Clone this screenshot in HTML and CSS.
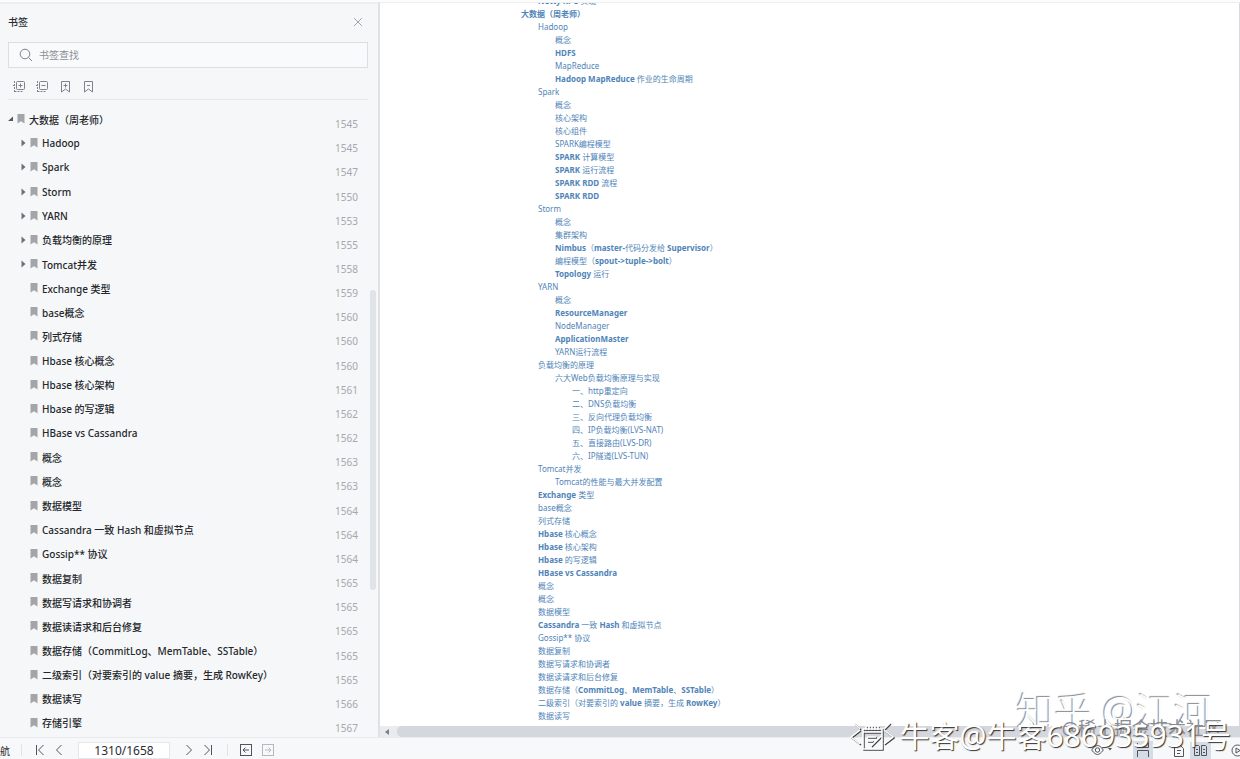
FILE: index.html
```
<!DOCTYPE html>
<html lang="zh-CN">
    <head>
        <meta charset="utf-8">
        <title>书签</title>
        <link rel="stylesheet" href="styles.css">
        <script src="main.js" defer></script>
    </head>

    <body>
        <svg class="defs" width="0" height="0">
            <symbol id="flag" viewBox="0 0 8 10">
                <path d="M0.5 0h7v9.6L4 7.2 0.5 9.6z" fill="#a3a5a8"/>
            </symbol>
            <symbol id="closed" viewBox="0 0 5 8">
                <path d="M0.5 0.5L4.5 4 0.5 7.5z" fill="#6d6f73"/>
            </symbol>
            <symbol id="open" viewBox="0 0 5 8">
                <path d="M5 1.5V6H0z" fill="#55575b"/>
            </symbol>
            <symbol id="logo" viewBox="0 0 46 32">
                <path d="M11 10L2 17l9 7M35 10l9 7-9 7M14 9h19v20H14zM14 12h19M18 17h9M18 21h6M22 26l10-10M5 3l6 6M41 3l-6 6M17 6v4M20 6v4M23 6v4M26 6v4M29 6v4" fill="none" stroke-width="1.5"/>
            </symbol>
        </svg>

        <div class="workspace">
            <aside class="sidebar">
                <header class="sidebarHeader">
                    <h1>书签</h1>
                    <button type="button" class="iconButton close" aria-label="关闭">
                        <svg width="10" height="10" viewBox="0 0 10 10"><path d="M1 1l8 8M9 1L1 9"/></svg>
                    </button>
                </header>

                <label class="search">
                    <svg width="14" height="14" viewBox="0 0 14 14"><circle cx="6" cy="6" r="4.8"/><path d="M9.6 9.6L13 13"/></svg>
                    <input type="text" placeholder="书签查找" aria-label="书签查找">
                </label>

                <div class="tools">
                    <button type="button" class="iconButton" aria-label="展开">
                        <svg width="13" height="13" viewBox="0 0 13 13"><rect x="3.5" y="1.5" width="8" height="8" rx="1"/><path d="M5.5 5.5h4M7.5 3.5v4"/><path d="M1.5 1v11M1.5 11.5h8M0 5.5h2" stroke-dasharray="2 1"/></svg>
                    </button>
                    <button type="button" class="iconButton" aria-label="折叠">
                        <svg width="13" height="13" viewBox="0 0 13 13"><rect x="3.5" y="1.5" width="8" height="8" rx="1"/><path d="M5.5 5.5h4"/><path d="M1.5 1v11M1.5 11.5h8M0 5.5h2" stroke-dasharray="2 1"/></svg>
                    </button>
                    <button type="button" class="iconButton" aria-label="添加书签">
                        <svg width="13" height="13" viewBox="0 0 13 13"><path d="M2.5 1.5h8v10.5L6.5 9l-4 3zM4.5 5.5h4M6.5 3.5v4"/></svg>
                    </button>
                    <button type="button" class="iconButton" aria-label="删除书签">
                        <svg width="13" height="13" viewBox="0 0 13 13"><path d="M2.5 1.5h8v10.5L6.5 9l-4 3zM5 5.5h3"/></svg>
                    </button>
                </div>

                <ul class="bookmarks" id="bookmarks"></ul>
                <div class="sidebarScroll"></div>
            </aside>

            <main class="page">
                <nav class="toc" id="toc"></nav>
                <div class="scrollbar">
                    <svg width="4" height="6" viewBox="0 0 4 6"><path d="M4 0v6L0 3z" fill="#7c7f88"/></svg>
                    <div class="thumb"></div>
                </div>
            </main>
        </div>

        <footer class="statusBar">
            <span class="navLabel">航</span>
            <span class="divider"></span>
            <button type="button" class="iconButton" aria-label="首页">
                <svg width="10" height="12" viewBox="0 0 10 12"><path d="M1.5 1v10M8.5 1l-5 5 5 5"/></svg>
            </button>
            <button type="button" class="iconButton" aria-label="上一页">
                <svg width="8" height="12" viewBox="0 0 8 12"><path d="M6.5 1l-5 5 5 5"/></svg>
            </button>
            <input type="text" class="pageInput" value="1310/1658" aria-label="页码">
            <button type="button" class="iconButton" aria-label="下一页">
                <svg width="8" height="12" viewBox="0 0 8 12"><path d="M1.5 1l5 5-5 5"/></svg>
            </button>
            <button type="button" class="iconButton" aria-label="末页">
                <svg width="10" height="12" viewBox="0 0 10 12"><path d="M1.5 1l5 5-5 5M8.5 1v10"/></svg>
            </button>
            <span class="divider wide"></span>
            <button type="button" class="iconButton" aria-label="后退">
                <svg width="12" height="12" viewBox="0 0 12 12"><rect x="0.5" y="0.5" width="11" height="11"/><path d="M9 6H3M5.5 3.5L3 6l2.5 2.5"/></svg>
            </button>
            <button type="button" class="iconButton forward" aria-label="前进">
                <svg width="12" height="12" viewBox="0 0 12 12"><rect x="0.5" y="0.5" width="11" height="11"/><path d="M3 6h6M6.5 3.5L9 6 6.5 8.5"/></svg>
            </button>
            <div class="viewModes">
                <button type="button" class="iconButton" aria-label="护眼">
                    <svg width="22" height="12" viewBox="0 0 22 12"><path d="M0.7 6C3 2.6 5 1.5 6.5 1.5S10 2.6 12.3 6C10 9.4 8 10.5 6.5 10.5S3 9.4 0.7 6z"/><circle cx="6.5" cy="6" r="2.2"/><path d="M17 4h4l-2 2.5z" fill="#50545c" stroke="none"/></svg>
                </button>
                <button type="button" class="iconButton active" aria-label="适合宽度">
                    <svg width="14" height="14" viewBox="0 0 14 14"><path d="M1.5 0v4.5h11V0M1.5 14V7.5h11V14"/></svg>
                </button>
                <div class="pageModes">
                    <button type="button" class="iconButton" aria-label="单页">
                        <svg width="12" height="13" viewBox="0 0 12 13"><path d="M1.5 1.5h6l3 3v8h-9zM4 6.5h4M4 9.5h3"/></svg>
                    </button>
                    <button type="button" class="iconButton active" aria-label="双页">
                        <svg width="15" height="13" viewBox="0 0 15 13"><path d="M1.5 1.5h4l1 1v9h-5zM8.5 1.5h4l1 1v9h-5zM3 5.5h2M3 8.5h2M10 5.5h2M10 8.5h2"/></svg>
                    </button>
                </div>
                <button type="button" class="iconButton" aria-label="播放">
                    <svg width="13" height="13" viewBox="0 0 13 13"><circle cx="6.5" cy="6.5" r="5.5"/><path d="M5 4v5l4-2.5z"/></svg>
                </button>
            </div>
        </footer>

        <div class="mark zhihu">知乎 @江河</div>
        <div class="mark juejin">@稀土掘金技术社区</div>
        <div class="mark niuke">
            <svg width="46" height="32" viewBox="0 0 46 32">
                <use href="#logo" x="1" y="1" stroke="#444"/>
                <use href="#logo" stroke="#fff"/>
            </svg>
            <span>牛客@牛客686935931号</span>
        </div>
    </body>
</html>
```
FILE: styles.css
```
* {
    box-sizing: border-box;
}

body {
    margin: 0;
    height: 100vh;
    display: flex;
    flex-direction: column;
    overflow: hidden;
    position: relative;
    font-family: "Noto Sans", "Noto Sans CJK SC", sans-serif;
    font-size: 10px;
    color: #2b2d31;
    background-color: #fff;
    border-top: 2px solid #fcfcfc;
}

.defs {
    position: absolute;
}

button,
input {
    font: inherit;
    color: inherit;
}

input:focus {
    outline: none;
}

.iconButton {
    display: flex;
    padding: 0;
    border: 0;
    background: none;
    cursor: pointer;
}

svg {
    display: block;
    flex: none;
}

.iconButton svg,
.search svg {
    fill: none;
    stroke: #7e828a;
}

.close svg {
    stroke: #a3a6ab;
}

.workspace {
    flex: 1;
    min-height: 0;
    display: flex;
}

.sidebar {
    position: relative;
    flex: none;
    width: 380px;
    padding: 0 10px 2px 8px;
    display: flex;
    flex-direction: column;
    background-color: #f5f7f9;
    border-top: 2px solid #eceef0;
    border-right: 2px solid #dfe1e4;
}

.sidebarHeader {
    display: flex;
    align-items: center;
    justify-content: space-between;
    height: 35px;
    padding-right: 5px;
}

.sidebarHeader h1 {
    margin: 0;
    font-size: 10px;
    font-weight: 500;
}

.search {
    display: flex;
    align-items: center;
    gap: 6px;
    height: 26px;
    margin-top: 3px;
    padding-left: 10px;
    border: 1px solid #dcdfe2;
    background-color: #f8fafb;
}

.search input {
    flex: 1;
    padding: 0;
    border: 0;
    background: none;
}

.search input::placeholder {
    color: #8d9096;
    opacity: 1;
}

.tools {
    display: flex;
    align-items: center;
    gap: 10px;
    height: 32px;
    padding: 5px 0 0 5px;
    border-bottom: 1px solid #e4e7ea;
}

.bookmarks {
    flex: 1;
    display: flex;
    flex-direction: column;
    list-style: none;
    margin: 0;
    padding: 7px 0 0;
}

.bookmarks li {
    flex: 1 1 24px;
    display: flex;
    align-items: center;
    gap: 4px;
    padding: 0 10px 0 0;
}

.bookmarks .child {
    padding-left: 13px;
}

.bookmarks a {
    flex: 1;
    color: #25272b;
    font-weight: 500;
    text-decoration: none;
}

.bookmarks .num {
    padding-top: 10px;
    color: #a5a8ae;
}

.sidebarScroll {
    position: absolute;
    right: 2px;
    top: 39%;
    width: 6px;
    height: 41%;
    border-radius: 3px;
    background-color: #e1e4e7;
}

.page {
    flex: 1;
    min-width: 0;
    display: flex;
    flex-direction: column;
    border-top: 1px solid #eeeef0;
}

.toc {
    flex: 1;
    min-height: 0;
    overflow: hidden;
    padding-left: 141px;
    border-right: 1px solid #d8dadf;
    font-size: 8px;
    line-height: 13px;
}

.toc a {
    display: block;
    color: #4f84b8;
    text-decoration: none;
    white-space: nowrap;
}

.toc a:first-child {
    margin-top: -9px;
}

.toc .level1 {
    padding-left: 17px;
}

.toc .level2 {
    padding-left: 34px;
}

.toc .level3 {
    padding-left: 51px;
}

.scrollbar {
    display: flex;
    align-items: center;
    height: 11px;
    padding-left: 5px;
    gap: 8px;
    background-color: #e9ebef;
}

.thumb {
    flex: 1;
    height: 11px;
    border-radius: 5px 0 0 5px;
    background-color: #d5d7df;
}

.statusBar {
    flex: none;
    display: flex;
    align-items: center;
    height: 22px;
    padding-top: 3px;
    border-top: 1px solid #e8eaec;
    background-color: #f6f8f9;
    font-size: 12px;
}

.statusBar svg {
    stroke: #50545c;
}

.navLabel {
    width: 9px;
    font-size: 10px;
}

.divider {
    width: 1px;
    height: 12px;
    margin: 0 13px 0 12px;
    background-color: #e1e3e6;
}

.divider.wide {
    margin: 0 12px 0 14px;
}

.statusBar > .iconButton + .iconButton {
    margin-left: 10px;
}

.statusBar .pageInput {
    width: 92px;
    height: 17px;
    margin: 0 15px;
    padding: 0;
    border: 1px solid #e5e7e9;
    background-color: #fff;
    text-align: center;
}

.statusBar .forward svg {
    stroke: #b5b8bd;
}

.viewModes {
    display: flex;
    align-items: center;
    gap: 20px;
    margin-left: auto;
    margin-right: -4px;
}

.pageModes {
    display: flex;
    align-items: center;
    gap: 5px;
}

.viewModes .active {
    padding: 2px 3px;
    background-color: #d5dce5;
}

.mark {
    position: absolute;
    white-space: nowrap;
    line-height: 1;
    color: #fff;
}

.zhihu {
    right: 28px;
    bottom: 30px;
    font-size: 38px;
    font-weight: 300;
    text-shadow: -1px -1px 1px #888;
}

.juejin {
    right: 18px;
    bottom: 22px;
    font-size: 18px;
    color: #888b92;
}

.niuke {
    right: 9px;
    bottom: 7px;
    display: flex;
    align-items: center;
    gap: 5px;
    font-size: 30px;
    text-shadow: 1px 1px 1px #333;
}
```
FILE: main.js
```
// state: "open", "closed" or "" for a leaf
const bookmarks = [
    ["大数据（周老师）", 1545, "open"],
    ["Hadoop", 1545, "closed"],
    ["Spark", 1547, "closed"],
    ["Storm", 1550, "closed"],
    ["YARN", 1553, "closed"],
    ["负载均衡的原理", 1555, "closed"],
    ["Tomcat并发", 1558, "closed"],
    ["Exchange 类型", 1559, ""],
    ["base概念", 1560, ""],
    ["列式存储", 1560, ""],
    ["Hbase 核心概念", 1560, ""],
    ["Hbase 核心架构", 1561, ""],
    ["Hbase 的写逻辑", 1562, ""],
    ["HBase vs Cassandra", 1562, ""],
    ["概念", 1563, ""],
    ["概念", 1563, ""],
    ["数据模型", 1564, ""],
    ["Cassandra 一致 Hash 和虚拟节点", 1564, ""],
    ["Gossip** 协议", 1564, ""],
    ["数据复制", 1565, ""],
    ["数据写请求和协调者", 1565, ""],
    ["数据读请求和后台修复", 1565, ""],
    ["数据存储（CommitLog、MemTable、SSTable）", 1565, ""],
    ["二级索引（对要索引的 value 摘要，生成 RowKey）", 1565, ""],
    ["数据读写", 1566, ""],
    ["存储引擎", 1567, ""]
];

const toc = [
    [1, "<b>Netty RPC</b> 实现"],
    [0, "<b>大数据（周老师）</b>"],
    [1, "Hadoop"],
    [2, "概念"],
    [2, "<b>HDFS</b>"],
    [2, "MapReduce"],
    [2, "<b>Hadoop MapReduce</b> 作业的生命周期"],
    [1, "Spark"],
    [2, "概念"],
    [2, "核心架构"],
    [2, "核心组件"],
    [2, "SPARK编程模型"],
    [2, "<b>SPARK</b> 计算模型"],
    [2, "<b>SPARK</b> 运行流程"],
    [2, "<b>SPARK RDD</b> 流程"],
    [2, "<b>SPARK RDD</b>"],
    [1, "Storm"],
    [2, "概念"],
    [2, "集群架构"],
    [2, "<b>Nimbus</b>（<b>master-</b>代码分发给 <b>Supervisor</b>）"],
    [2, "编程模型（<b>spout-&gt;tuple-&gt;bolt</b>）"],
    [2, "<b>Topology</b> 运行"],
    [1, "YARN"],
    [2, "概念"],
    [2, "<b>ResourceManager</b>"],
    [2, "NodeManager"],
    [2, "<b>ApplicationMaster</b>"],
    [2, "YARN运行流程"],
    [1, "负载均衡的原理"],
    [2, "六大Web负载均衡原理与实现"],
    [3, "一、http重定向"],
    [3, "二、DNS负载均衡"],
    [3, "三、反向代理负载均衡"],
    [3, "四、IP负载均衡(LVS-NAT)"],
    [3, "五、直接路由(LVS-DR)"],
    [3, "六、IP隧道(LVS-TUN)"],
    [1, "Tomcat并发"],
    [2, "Tomcat的性能与最大并发配置"],
    [1, "<b>Exchange</b> 类型"],
    [1, "base概念"],
    [1, "列式存储"],
    [1, "<b>Hbase</b> 核心概念"],
    [1, "<b>Hbase</b> 核心架构"],
    [1, "<b>Hbase</b> 的写逻辑"],
    [1, "<b>HBase vs Cassandra</b>"],
    [1, "概念"],
    [1, "概念"],
    [1, "数据模型"],
    [1, "<b>Cassandra</b> 一致 <b>Hash</b> 和虚拟节点"],
    [1, "Gossip** 协议"],
    [1, "数据复制"],
    [1, "数据写请求和协调者"],
    [1, "数据读请求和后台修复"],
    [1, "数据存储（<b>CommitLog</b>、<b>MemTable</b>、<b>SSTable</b>）"],
    [1, "二级索引（对要索引的 <b>value</b> 摘要，生成 <b>RowKey</b>）"],
    [1, "数据读写"]
];

document.getElementById("bookmarks").innerHTML = bookmarks.map(([title, page, state]) => `
    <li class="${state === "open" ? "root" : "child"}">
        <svg width="5" height="8">${state ? `<use href="#${state}"/>` : ""}</svg>
        <svg width="8" height="10"><use href="#flag"/></svg>
        <a href="#p${page}">${title}</a>
        <span class="num">${page}</span>
    </li>`).join("");

document.getElementById("toc").innerHTML = toc.map(([level, title]) =>
    `<a href="#toc" class="level${level}">${title}</a>`).join("");
```
